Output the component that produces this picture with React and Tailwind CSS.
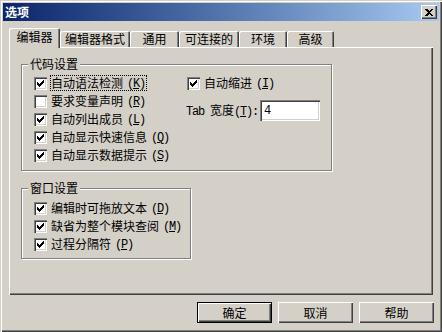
import React from "react";

const raised =
  "shadow-[inset_1px_1px_0_#fff,inset_-1px_-1px_0_#404040,inset_-2px_-2px_0_#808080]";
const sunken =
  "shadow-[inset_1px_1px_0_#808080,inset_2px_2px_0_#404040,inset_-1px_-1px_0_#fff,inset_-2px_-2px_0_#d4d0c8]";

const M = ({ children }) => (
  <span className="font-['Liberation_Mono',monospace] tracking-[-1.2px]">{children}</span>
);

const Key = ({ k }) => (
  <M>
    ({<u>{k}</u>})
  </M>
);

const Tick = () => (
  <svg className="absolute left-[3px] top-[3px]" width="7" height="7" shapeRendering="crispEdges">
    <rect x="0" y="2" width="1" height="3" fill="#000" />
    <rect x="1" y="3" width="1" height="3" fill="#000" />
    <rect x="2" y="4" width="1" height="3" fill="#000" />
    <rect x="3" y="3" width="1" height="3" fill="#000" />
    <rect x="4" y="2" width="1" height="3" fill="#000" />
    <rect x="5" y="1" width="1" height="3" fill="#000" />
    <rect x="6" y="0" width="1" height="3" fill="#000" />
  </svg>
);

const Check = ({ on }) => (
  <span className={`relative inline-block w-[13px] h-[13px] shrink-0 bg-white ${sunken}`}>
    {on && <Tick />}
  </span>
);

const Row = ({ on, text, k, focus }) => (
  <div className="flex items-center h-[18px] gap-[3px]">
    <Check on={on} />
    <span
      className={`flex items-center h-[16px] pr-[1px] border border-dotted ${
        focus ? "border-black" : "border-transparent"
      }`}
    >
      {text}
      <span className="ml-[4px]">
        <Key k={k} />
      </span>
    </span>
  </div>
);

const Group = ({ title, className, children }) => (
  <div
    className={`relative border border-[#808080] shadow-[inset_1px_1px_0_#fff,1px_1px_0_#fff] ${className}`}
  >
    <span className="absolute -top-[9px] left-[6px] bg-[#d4d0c8] px-[2px] leading-[16px]">
      {title}
    </span>
    {children}
  </div>
);

const tabs = [
  { label: "编辑器", w: "w-[51px]", active: true },
  { label: "编辑器格式", w: "w-[70px]" },
  { label: "通用", w: "w-[49px]" },
  { label: "可连接的", w: "w-[60px]" },
  { label: "环境", w: "w-[48px]" },
  { label: "高级", w: "w-[47px]" },
];

const Button = ({ children, isDefault }) => (
  <button
    className={`w-[75px] h-[21px] bg-[#d4d0c8] flex items-center justify-center leading-none ${
      isDefault
        ? "border border-black shadow-[inset_1px_1px_0_#fff,inset_-1px_-1px_0_#404040,inset_-2px_-2px_0_#808080]"
        : raised
    }`}
  >
    {children}
  </button>
);

export default function App() {
  return (
    <div className="w-[442px] h-[332px] p-[3px] bg-[#d4d0c8] text-black text-[12px] font-['Noto_Sans_CJK_SC',sans-serif] shadow-[inset_1px_1px_0_#d4d0c8,inset_2px_2px_0_#fff,inset_-1px_-1px_0_#404040,inset_-2px_-2px_0_#808080] flex flex-col">
      {/* title bar */}
      <div className="h-[18px] shrink-0 flex items-center justify-between pl-[2px] pr-[2px] bg-gradient-to-r from-[#0a246a] to-[#a6caf0]">
        <span className="text-white font-bold leading-none">选项</span>
        <span className={`w-[16px] h-[14px] bg-[#d4d0c8] flex items-center justify-center ${raised}`}>
          <svg width="8" height="7" viewBox="0 0 8 7" shapeRendering="crispEdges">
            <path d="M0 0h2l2 2 2-2h2L5 3.5 8 7H6L4 5 2 7H0l3-3.5z" fill="#000" />
          </svg>
        </span>
      </div>

      {/* tabs */}
      <div className="mt-[7px] ml-[6px] flex items-end">
        {tabs.map((t) => (
          <div
            key={t.label}
            className={`${t.w} flex items-center justify-center bg-[#d4d0c8] rounded-t-[2px] shadow-[inset_1px_1px_0_#fff,inset_-1px_0_0_#404040,inset_-2px_0_0_#808080] ${
              t.active ? "relative z-10 h-[20px] -mb-[1px] pb-[3px]" : "h-[16px]"
            }`}
          >
            {t.label}
          </div>
        ))}
      </div>

      {/* panel */}
      <div className={`mx-[6px] h-[248px] shrink-0 flex flex-col ${raised}`}>
        <Group title="代码设置" className="ml-[12px] mt-[17px] w-[311px] h-[107px] flex pt-[9px] pl-[12px]">
          <div className="w-[153px] flex flex-col">
            <Row on text="自动语法检测" k="K" focus />
            <Row text="要求变量声明" k="R" />
            <Row on text="自动列出成员" k="L" />
            <Row on text="自动显示快速信息" k="Q" />
            <Row on text="自动显示数据提示" k="S" />
          </div>
          <div className="flex flex-col">
            <Row on text="自动缩进" k="I" />
            <div className="mt-[8px] -ml-[1px] flex items-center h-[21px]">
              <span>
                <M>Tab </M>宽度<M>(<u>T</u>):</M>
              </span>
              <div className={`ml-[2px] w-[60px] h-[21px] bg-white flex items-center pl-[4px] ${sunken}`}>
                <M>4</M>
              </div>
            </div>
          </div>
        </Group>

        <Group title="窗口设置" className="ml-[12px] mt-[17px] w-[170px] h-[71px] pt-[10px] pl-[12px] flex flex-col">
          <Row on text="编辑时可拖放文本" k="D" />
          <Row on text="缺省为整个模块查阅" k="M" />
          <Row on text="过程分隔符" k="P" />
        </Group>
      </div>

      {/* buttons */}
      <div className="mt-[7px] mr-[5px] flex justify-end gap-[6px]">
        <Button isDefault>确定</Button>
        <Button>取消</Button>
        <Button>帮助</Button>
      </div>
    </div>
  );
}
